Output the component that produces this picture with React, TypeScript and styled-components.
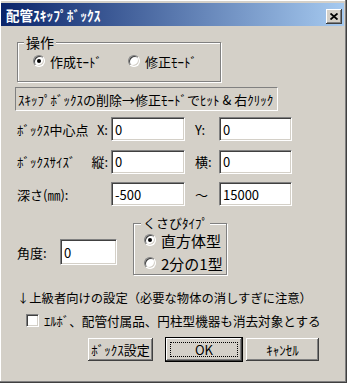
import React from "react";
import styled, { createGlobalStyle, css } from "styled-components";

const GlobalStyle = createGlobalStyle`
  html, body {
    margin: 0;
    padding: 0;
    background: #ffffff;
  }
  body {
    font-family: "Noto Sans CJK JP", "Noto Sans", sans-serif;
    font-size: 13px;
    color: #000;
  }
  * {
    box-sizing: border-box;
  }
`;

// classic 3d edges
const sunken = css`
  border: 1px solid;
  border-color: #808080 #ffffff #ffffff #808080;
  box-shadow: inset 1px 1px 0 #404040, inset -1px -1px 0 #d4d0c8;
`;

const raised = css`
  border: none;
  box-shadow: inset -1px -1px 0 #404040, inset 1px 1px 0 #ffffff,
    inset -2px -2px 0 #808080;
`;

const Window = styled.div`
  width: 347px;
  height: 383px;
  background: #d4d0c8;
  padding: 3px 3px 3px 1px;
  box-shadow: inset -1px -1px 0 #404040, inset -2px -2px 0 #808080,
    inset 1px 1px 0 #ffffff;
  display: flex;
  flex-direction: column;
`;

const TitleBar = styled.div`
  height: 23px;
  display: flex;
  align-items: flex-end;
  justify-content: space-between;
  padding: 0 2px 2px 5px;
  background: linear-gradient(to right, #0a246a, #a6caf0);
`;

const Title = styled.span`
  color: #fff;
  font-weight: bold;
  font-size: 13.5px;
  line-height: 17px;
`;

const CloseButton = styled.div`
  ${raised};
  width: 16px;
  height: 15px;
  background: #d4d0c8;
  display: flex;
  align-items: center;
  justify-content: center;
`;

const Body = styled.div`
  padding-left: 16px;
  display: flex;
  flex-direction: column;
  align-items: flex-start;
`;

const GroupFrame = styled.div<{ $w: number; $h: number; $mt?: number }>`
  position: relative;
  width: ${p => p.$w}px;
  height: ${p => p.$h}px;
  margin-top: ${p => p.$mt ?? 0}px;
  border: 1px solid #808080;
  box-shadow: inset 1px 1px 0 #fff, 1px 1px 0 #fff;
`;

const Legend = styled.span<{ $size?: number; $left?: number }>`
  position: absolute;
  top: -9px;
  left: ${p => p.$left ?? 6}px;
  padding: 0 2px;
  background: #d4d0c8;
  font-size: ${p => p.$size ?? 13}px;
  line-height: 16px;
`;

const RadioRow = styled.div`
  display: flex;
  padding: 10px 0 0 15px;
`;

const RadioColumn = styled.div`
  display: flex;
  flex-direction: column;
  gap: 5px;
  padding: 7px 0 0 10px;
`;

const RadioOption = styled.label<{ $w?: number; $size?: number }>`
  display: flex;
  align-items: center;
  gap: 5px;
  width: ${p => (p.$w ? `${p.$w}px` : "auto")};
  height: ${p => (p.$size ?? 13) + 3}px;
  font-size: ${p => p.$size ?? 13}px;
  line-height: 1;
`;

const RadioDot = styled.span<{ $on?: boolean }>`
  position: relative;
  width: 12px;
  height: 12px;
  flex: none;
  border-radius: 50%;
  background: #fff;
  ${sunken};

  &::after {
    content: "";
    display: ${p => (p.$on ? "block" : "none")};
    position: absolute;
    left: 3px;
    top: 3px;
    width: 4px;
    height: 4px;
    border-radius: 50%;
    background: #000;
  }
`;

const InfoBox = styled.div`
  margin: 5px 0 0 -2px;
  width: 263px;
  height: 24px;
  border: 1px solid;
  border-color: #808080 #fff #fff #808080;
  padding-left: 2px;
  display: flex;
  align-items: center;
  white-space: nowrap;
`;

const FieldGrid = styled.div`
  margin-top: 6px;
  display: grid;
  grid-template-columns: 94px 74px 34px 73px;
  grid-auto-rows: 24px;
  row-gap: 8.5px;
`;

const FieldLabel = styled.div`
  display: flex;
  align-items: center;
  justify-content: space-between;
  padding-right: 3px;
  white-space: nowrap;
`;

const AxisLabel = styled.div`
  display: flex;
  align-items: center;
  padding-left: 10px;
`;

const TextBox = styled.input<{ $w?: number; $h?: number }>`
  ${sunken};
  width: ${p => (p.$w ? `${p.$w}px` : "100%")};
  height: ${p => p.$h ?? 24}px;
  background: #fff;
  font-family: inherit;
  font-size: 13px;
  padding: 0 3px;
  outline: none;
  color: #000;
`;

const AngleRow = styled.div`
  margin-top: 17px;
  display: flex;
  align-items: flex-start;
`;

const AngleField = styled.div`
  margin-top: 16px;
  margin-right: 16px;
  display: flex;
  align-items: center;
`;

const AngleLabel = styled.span`
  width: 43px;
`;

const Note = styled.div`
  margin-top: 15px;
  font-size: 12.3px;
  line-height: 16px;
  white-space: nowrap;
`;

const CheckRow = styled.label`
  margin: 6px 0 0 9px;
  display: flex;
  align-items: center;
  gap: 5px;
  height: 16px;
  font-size: 12.6px;
  white-space: nowrap;
`;

const CheckBox = styled.span`
  ${sunken};
  width: 13px;
  height: 13px;
  background: #fff;
  flex: none;
`;

const ButtonRow = styled.div`
  margin: 10px 0 0 71px;
  display: flex;
  gap: 4px;
`;

const Button = styled.button<{ $w: number; $gapAfter?: number; $default?: boolean }>`
  ${raised};
  width: ${p => p.$w}px;
  height: 23px;
  margin-right: ${p => p.$gapAfter ?? 0}px;
  background: #d4d0c8;
  font-family: inherit;
  font-size: 13px;
  color: #000;
  padding: 0;
  position: relative;

  ${p =>
    p.$default &&
    css`
      outline: 1px solid #000;
      &::after {
        content: "";
        position: absolute;
        inset: 4px;
        border: 1px dotted #000;
      }
    `}
`;

const App: React.FC = () => {
  return (
    <>
      <GlobalStyle />
      <Window>
        <TitleBar>
          <Title>配管ｽｷｯﾌﾟﾎﾞｯｸｽ</Title>
          <CloseButton>
            <svg width="8" height="7" viewBox="0 0 8 7">
              <path d="M0.5 0.5 L7.5 6.5 M7.5 0.5 L0.5 6.5" stroke="#000" strokeWidth="1.8" />
            </svg>
          </CloseButton>
        </TitleBar>

        <Body>
          <GroupFrame $w={204} $h={40} $mt={16}>
            <Legend $size={14}>操作</Legend>
            <RadioRow>
              <RadioOption $w={95}>
                <RadioDot $on />
                作成ﾓｰﾄﾞ
              </RadioOption>
              <RadioOption>
                <RadioDot />
                修正ﾓｰﾄﾞ
              </RadioOption>
            </RadioRow>
          </GroupFrame>

          <InfoBox>ｽｷｯﾌﾟﾎﾞｯｸｽの削除→修正ﾓｰﾄﾞでﾋｯﾄ &amp; 右ｸﾘｯｸ</InfoBox>

          <FieldGrid>
            <FieldLabel>
              <span>ﾎﾞｯｸｽ中心点</span>
              <span>X:</span>
            </FieldLabel>
            <TextBox value="0" readOnly />
            <AxisLabel>Y:</AxisLabel>
            <TextBox value="0" readOnly />

            <FieldLabel>
              <span>ﾎﾞｯｸｽｻｲｽﾞ</span>
              <span>縦:</span>
            </FieldLabel>
            <TextBox value="0" readOnly />
            <AxisLabel>横:</AxisLabel>
            <TextBox value="0" readOnly />

            <FieldLabel>
              <span>深さ(㎜):</span>
            </FieldLabel>
            <TextBox value="-500" readOnly />
            <AxisLabel>～</AxisLabel>
            <TextBox value="15000" readOnly />
          </FieldGrid>

          <AngleRow>
            <AngleField>
              <AngleLabel>角度:</AngleLabel>
              <TextBox $w={57} $h={26} value="0" readOnly />
            </AngleField>
            <GroupFrame $w={94} $h={52}>
              <Legend $left={7}>くさびﾀｲﾌﾟ</Legend>
              <RadioColumn>
                <RadioOption $size={15}>
                  <RadioDot $on />
                  直方体型
                </RadioOption>
                <RadioOption $size={15}>
                  <RadioDot />
                  2分の1型
                </RadioOption>
              </RadioColumn>
            </GroupFrame>
          </AngleRow>

          <Note>↓上級者向けの設定（必要な物体の消しすぎに注意）</Note>

          <CheckRow>
            <CheckBox />
            ｴﾙﾎﾞ、配管付属品、円柱型機器も消去対象とする
          </CheckRow>

          <ButtonRow>
            <Button $w={65} $gapAfter={9}>ﾎﾞｯｸｽ設定</Button>
            <Button $w={76} $default>OK</Button>
            <Button $w={73}>ｷｬﾝｾﾙ</Button>
          </ButtonRow>
        </Body>
      </Window>
    </>
  );
};

export default App;
